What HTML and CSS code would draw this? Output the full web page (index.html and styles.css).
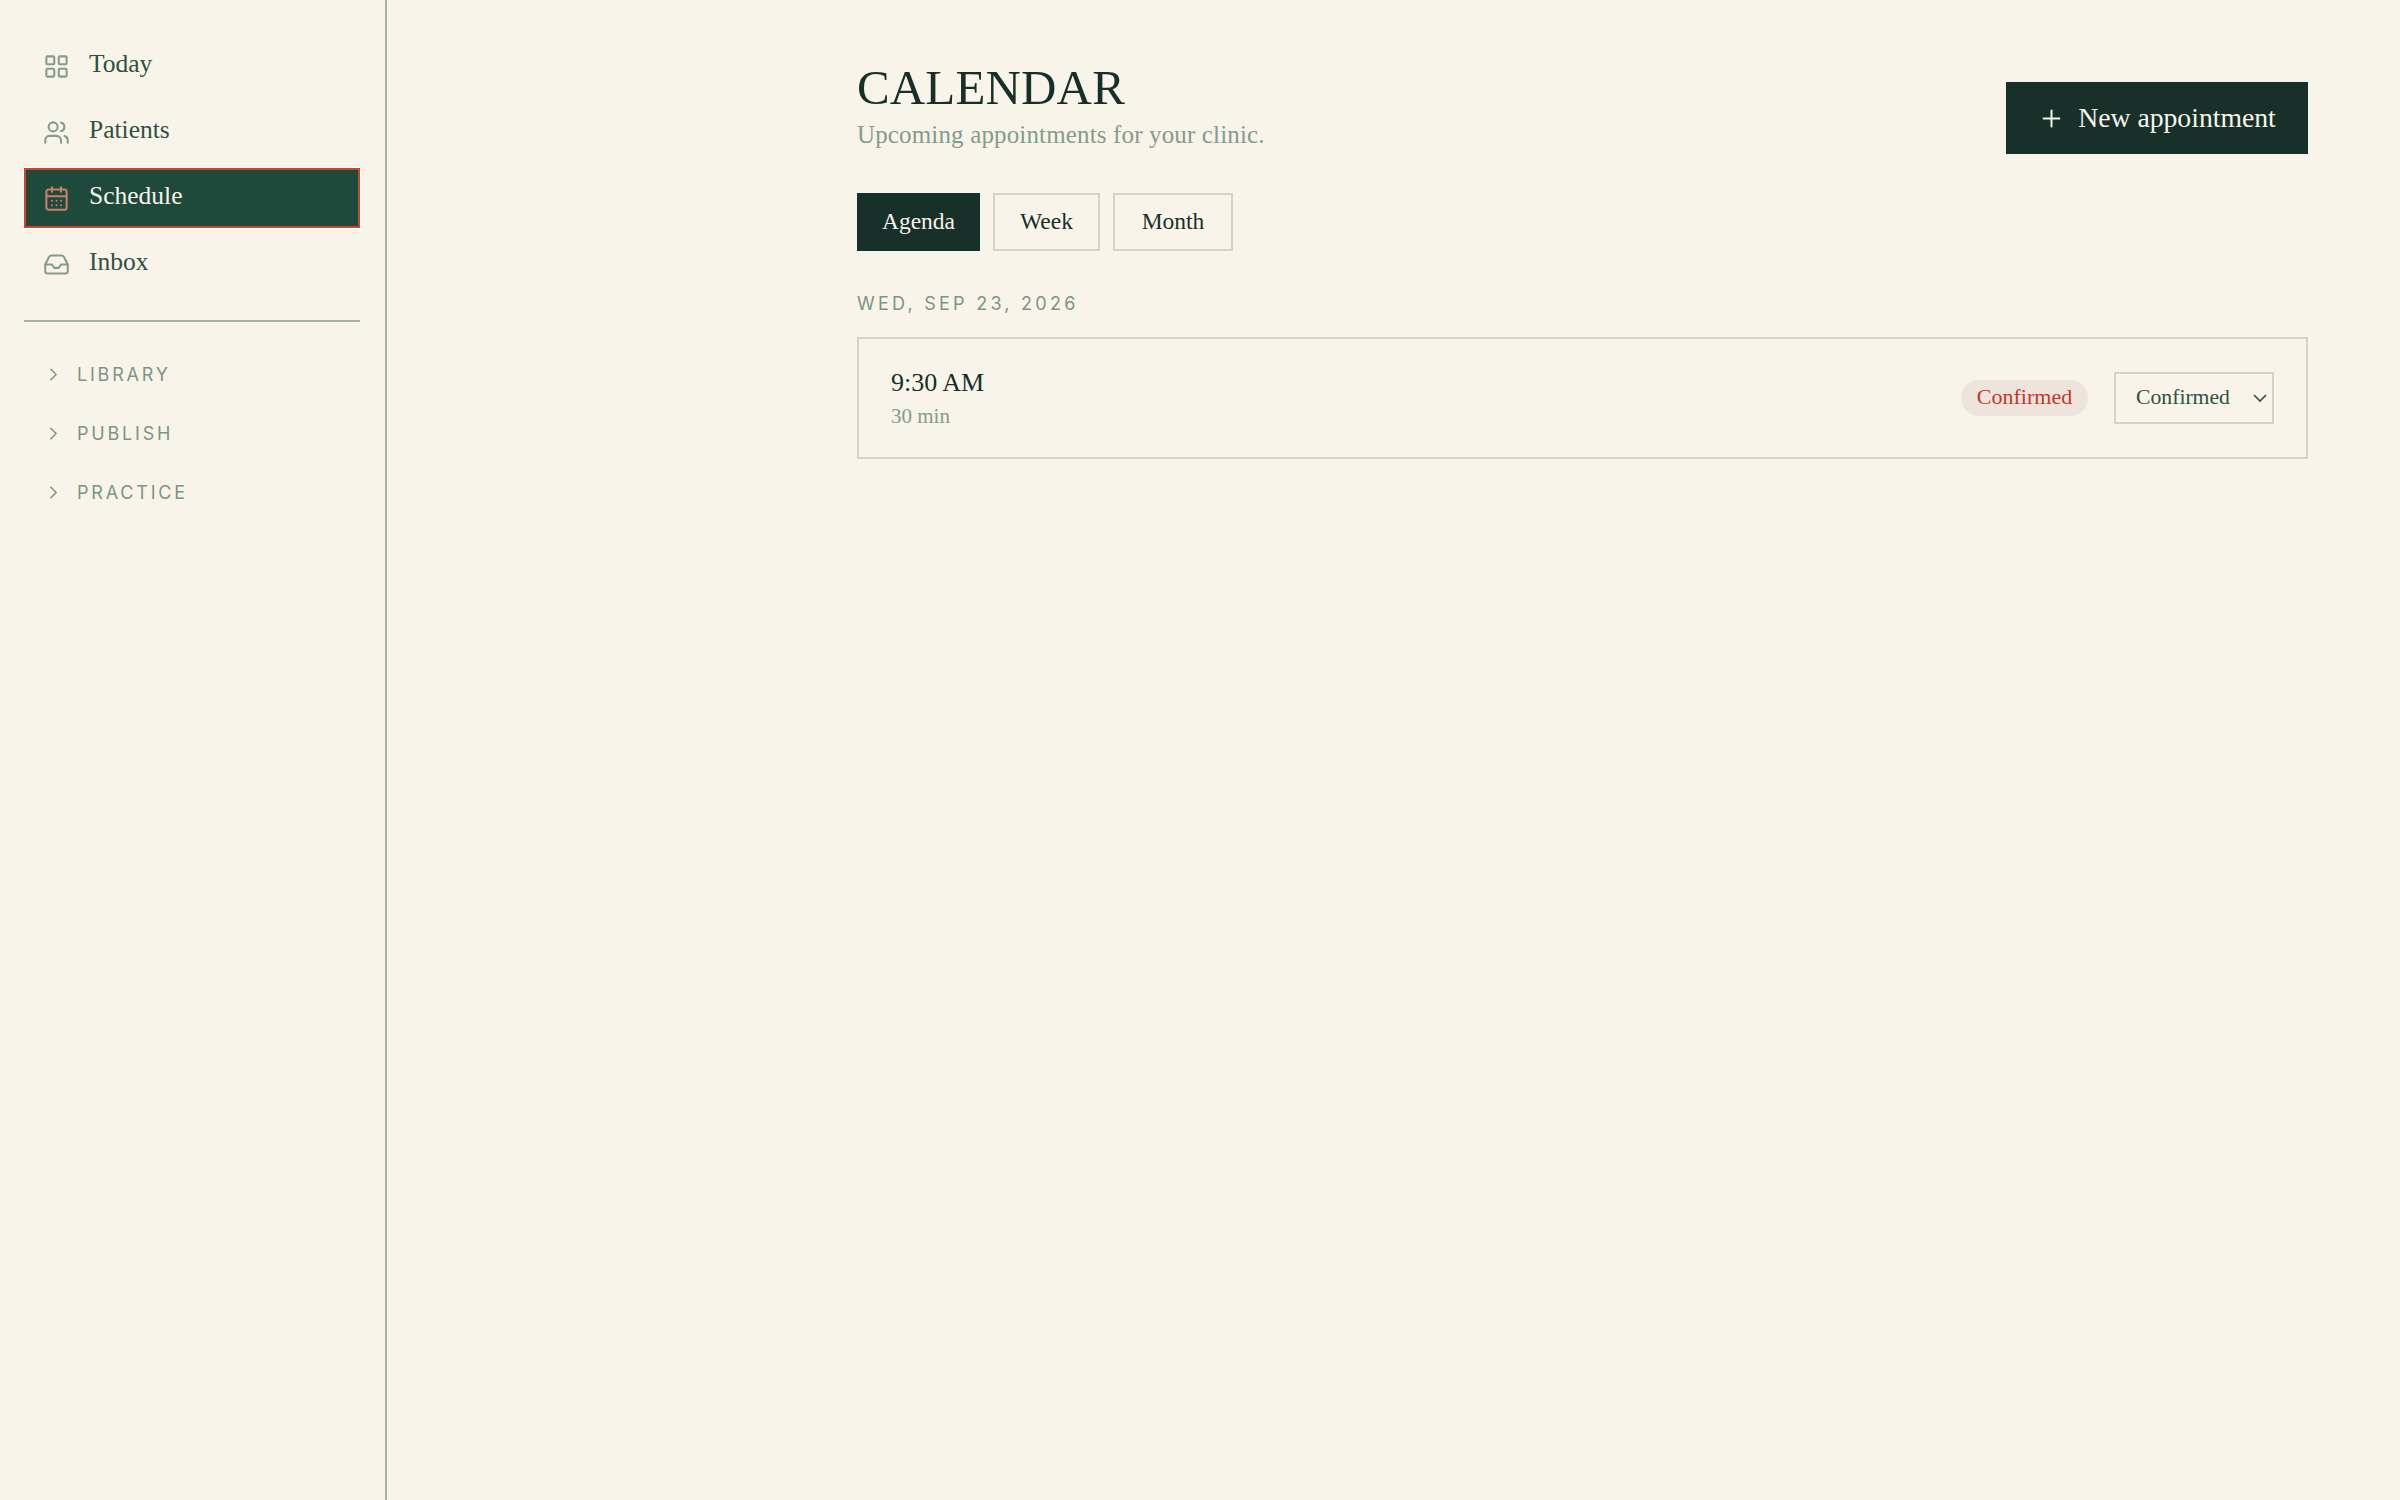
FILE: index.html
```html
<!DOCTYPE html>
<html lang="en">
<head>
<meta charset="utf-8">
<title>Calendar</title>
<link rel="stylesheet" href="styles.css">
</head>
<body>
<div class="app">
  <aside class="sidebar">
    <nav class="nav">
      <a class="nav-item">
        <svg class="nav-icon" viewBox="0 0 24 24"><rect x="3" y="3" width="7" height="7" rx="1"/><rect x="14" y="3" width="7" height="7" rx="1"/><rect x="3" y="14" width="7" height="7" rx="1"/><rect x="14" y="14" width="7" height="7" rx="1"/></svg>
        <span>Today</span>
      </a>
      <a class="nav-item">
        <svg class="nav-icon" viewBox="0 0 24 24"><path d="M16 21v-2a4 4 0 0 0-4-4H6a4 4 0 0 0-4 4v2"/><circle cx="9" cy="7" r="4"/><path d="M22 21v-2a4 4 0 0 0-3-3.87"/><path d="M16 3.13a4 4 0 0 1 0 7.75"/></svg>
        <span>Patients</span>
      </a>
      <a class="nav-item active">
        <svg class="nav-icon" viewBox="0 0 24 24"><rect x="3" y="4" width="18" height="18" rx="2"/><path d="M8 2v4M16 2v4M3 10h18"/><path d="M8 14h.01M12 14h.01M16 14h.01M8 18h.01M12 18h.01M16 18h.01"/></svg>
        <span>Schedule</span>
      </a>
      <a class="nav-item">
        <svg class="nav-icon" viewBox="0 0 24 24"><path d="M22 12h-6l-2 3h-4l-2-3H2"/><path d="M5.45 5.11 2 12v6a2 2 0 0 0 2 2h16a2 2 0 0 0 2-2v-6l-3.45-6.89A2 2 0 0 0 16.76 4H7.24a2 2 0 0 0-1.79 1.11z"/></svg>
        <span>Inbox</span>
      </a>
    </nav>
    <div class="groups">
      <a class="group"><svg class="chev" viewBox="0 0 24 24"><path d="m9 18 6-6-6-6"/></svg><span>LIBRARY</span></a>
      <a class="group"><svg class="chev" viewBox="0 0 24 24"><path d="m9 18 6-6-6-6"/></svg><span>PUBLISH</span></a>
      <a class="group"><svg class="chev" viewBox="0 0 24 24"><path d="m9 18 6-6-6-6"/></svg><span>PRACTICE</span></a>
    </div>
  </aside>
  <main class="main">
    <div class="content">
      <header class="header">
        <div class="heading">
          <h1 class="title">CALENDAR</h1>
          <p class="subtitle">Upcoming appointments for your clinic.</p>
        </div>
        <button class="primary">
          <svg class="plus" viewBox="0 0 24 24"><path d="M5 12h14M12 5v14"/></svg>
          <span>New appointment</span>
        </button>
      </header>
      <div class="tabs">
        <button class="tab tab-agenda selected">Agenda</button>
        <button class="tab tab-week">Week</button>
        <button class="tab tab-month">Month</button>
      </div>
      <h2 class="date">WED, SEP 23, 2026</h2>
      <article class="card">
        <div class="when">
          <div class="time">9:30 AM</div>
          <div class="duration">30 min</div>
        </div>
        <div class="status">
          <span class="badge">Confirmed</span>
          <div class="select">
            <span>Confirmed</span>
            <svg class="select-chev" viewBox="0 0 24 24"><path d="m6 9 6 6 6-6"/></svg>
          </div>
        </div>
      </article>
    </div>
  </main>
</div>
</body>
</html>
```
FILE: styles.css
```css
* { box-sizing: border-box; }
html, body { margin: 0; height: 100%; }
body {
  background: #f8f4ea;
  color: #163029;
  font-family: "Liberation Serif", serif;
}
.app { display: flex; min-height: 1500px; }

.sidebar {
  width: 387px;
  flex: none;
  border-right: 2px solid #a3b3a6;
  padding: 36px 25px 0 24px;
}
.nav { display: flex; flex-direction: column; gap: 6px; padding-bottom: 26px; border-bottom: 2px solid #a3b3a6; }
.nav-item {
  height: 60px;
  display: flex;
  align-items: center;
  gap: 19px;
  padding-left: 19px;
  font-size: 25.5px;
  color: #2f5042;
}
.nav-item span { position: relative; top: -2px; }
.nav-icon {
  width: 27px;
  height: 27px;
  fill: none;
  stroke: #839c8c;
  stroke-width: 1.8;
  stroke-linecap: round;
  stroke-linejoin: round;
}
.nav-item.active {
  background: #1e4a3b;
  color: #f8f4ea;
  border: 2px solid #c9432f;
  padding-left: 17px;
  outline: 1px solid #fdfbf6;
}
.nav-item.active .nav-icon { stroke: #c8806a; }
.groups { display: flex; flex-direction: column; padding-top: 28px; gap: 11px; }
.group {
  height: 48px;
  display: flex;
  align-items: center;
  gap: 13px;
  padding-left: 19px;
  font-family: Inter, sans-serif;
  font-size: 18px;
  font-weight: 400;
  letter-spacing: 2.8px;
  color: #7c9585;
}
.chev {
  width: 21px;
  height: 21px;
  fill: none;
  stroke: #7c9585;
  stroke-width: 1.8;
  stroke-linecap: round;
  stroke-linejoin: round;
}

.main { flex: 1; display: flex; justify-content: flex-end; padding-right: 92px; }
.content { width: 1451px; }
.header { display: flex; justify-content: space-between; align-items: flex-start; padding-top: 59px; height: 174px; }
.title {
  margin: 0;
  font-size: 49px;
  line-height: 58px;
  font-weight: 400;
  letter-spacing: 0.15px;
  color: #163029;
}
.subtitle {
  margin: 2px 0 0;
  font-size: 25px;
  line-height: 32px;
  letter-spacing: 0.15px;
  color: #839c8c;
}
.primary {
  width: 302px;
  height: 72px;
  margin-top: 23px;
  display: flex;
  align-items: center;
  justify-content: center;
  gap: 13px;
  background: #17312a;
  color: #f8f4ea;
  border: 0;
  font-family: inherit;
  font-size: 27.7px;
}
.plus { width: 27px; height: 27px; fill: none; stroke: #f8f4ea; stroke-width: 1.8; stroke-linecap: round; }
.tabs { display: flex; gap: 13px; margin-top: 19px; }
.tab {
  height: 58px;
  background: transparent;
  border: 2px solid #d3d4c5;
  color: #163029;
  font-family: inherit;
  font-size: 23.5px;
  padding: 0 0 2px;
}
.tab-agenda { width: 123px; }
.tab-week { width: 107px; }
.tab-month { width: 120px; }
.tab.selected { background: #17312a; border-color: #17312a; color: #f8f4ea; }
.date {
  margin: 41px 0 0;
  font-family: Inter, sans-serif;
  font-size: 18px;
  line-height: 24px;
  font-weight: 400;
  letter-spacing: 3.25px;
  color: #7c9585;
}
.card {
  margin-top: 21px;
  height: 122px;
  border: 2px solid #d3d4c5;
  display: flex;
  justify-content: space-between;
  align-items: center;
  padding: 0 32px;
}
.time { font-size: 26px; line-height: 32px; color: #163029; }
.duration { font-size: 21px; line-height: 28px; margin-top: 3px; color: #839c8c; }
.status { display: flex; align-items: center; gap: 26px; }
.badge {
  width: 127px;
  height: 36px;
  border-radius: 18px;
  background: #efe4dc;
  color: #c0392b;
  font-size: 22px;
  padding-bottom: 3px;
  display: flex;
  align-items: center;
  justify-content: center;
}
.select {
  width: 160px;
  height: 52px;
  border: 2px solid #d3d4c5;
  display: flex;
  align-items: center;
  justify-content: space-between;
  padding: 0 0 2px 20px;
  font-size: 21.7px;
  color: #2f5042;
}
.select-chev { width: 24px; height: 24px; fill: none; stroke: #2f5042; stroke-width: 1.6; position: relative; top: 1px; }
```
